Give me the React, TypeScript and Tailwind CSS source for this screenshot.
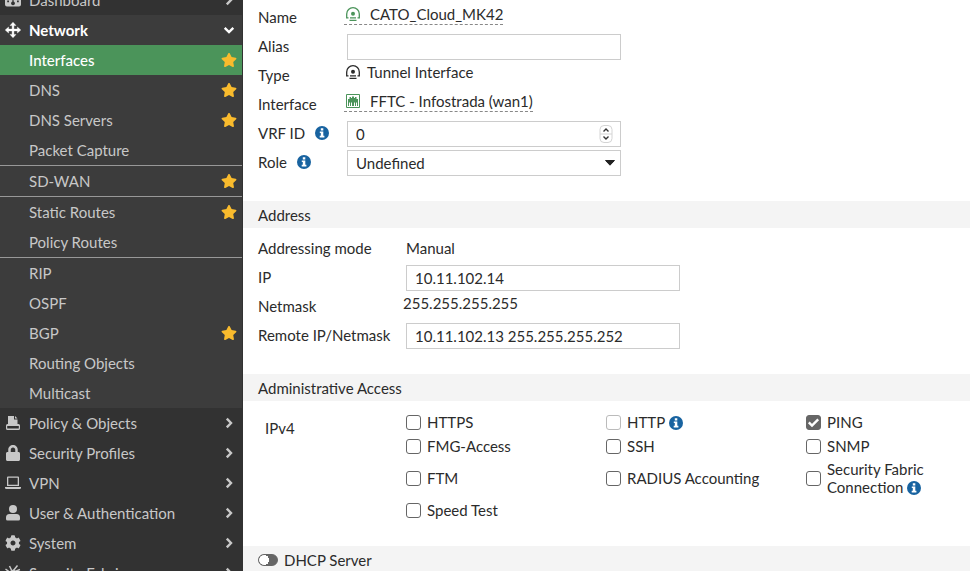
import type { ReactNode } from 'react'
import { FaCog, FaLock, FaStar } from 'react-icons/fa'

type MenuItem = {
  label: string;
  starred?: boolean;
  active?: boolean;
  divider?: boolean;
}

const networkItems: MenuItem[] = [
  { label: 'Interfaces', starred: true, active: true },
  { label: 'DNS', starred: true },
  { label: 'DNS Servers', starred: true },
  { label: 'Packet Capture' },
  { label: 'SD-WAN', starred: true, divider: true },
  { label: 'Static Routes', starred: true, divider: true },
  { label: 'Policy Routes' },
  { label: 'RIP', divider: true },
  { label: 'OSPF' },
  { label: 'BGP', starred: true },
  { label: 'Routing Objects' },
  { label: 'Multicast' },
];

const DashboardIcon = () => (
  <svg width="16" height="16" viewBox="0 0 16 16" fill="currentColor">
    <path fillRule="evenodd" d="M2.5 1h11A2.5 2.5 0 0 1 16 3.500V12.500A2 2 0 0 1 14 14.500H2A2 2 0 0 1 0 12.500V3.500A2.500 2.500 0 0 1 2.500 1ZM2.200 8.500v1.800H4V8.500ZM12 8.500v1.800h1.800V8.500ZM7.400 5v4.600a1.900 1.900 0 1 0 1.200 0V5ZM4 4.500v1.800h1.800V4.500ZM10.200 4.500v1.800H12V4.500Z" />
  </svg>
)

const NetworkIcon = () => (
  <svg width="16" height="16" viewBox="0 0 16 16" fill="currentColor" stroke="currentColor" strokeWidth="0.400" strokeLinejoin="round">
    <path d="M8 0.200l3 3.400H8.900v3.500h3.500V5L15.800 8l-3.400 3V8.900H8.900v3.500H11L8 15.800l-3-3.400h2.100V8.900H3.600V11L0.200 8l3.400-3v2.100h3.500V3.600H5z" />
  </svg>
)

const PolicyIcon = () => (
  <svg width="14" height="14" viewBox="0 0 14 14" fill="currentColor">
    <path d="M2 0h6v3.500h3.500V9H2z" />
    <path d="M9 0l2.500 2.500H9z" />
    <path fillRule="evenodd" d="M1.500 8h11A1.500 1.500 0 0 1 14 9.500v3a1.500 1.500 0 0 1-1.500 1.500h-11A1.500 1.500 0 0 1 0 12.500v-3A1.500 1.500 0 0 1 1.500 8zM1.200 10v2.500h11.600V10z" />
  </svg>
)

const LaptopIcon = () => (
  <svg width="16" height="14" viewBox="0 0 16 14" fill="currentColor">
    <path fillRule="evenodd" d="M3 0.500h10a1 1 0 0 1 1 1V10H2V1.500a1 1 0 0 1 1-1zM3.300 1.800v6.900h9.400V1.800z" />
    <path d="M0 11h16v0.700A1.300 1.300 0 0 1 14.700 13H1.300A1.300 1.300 0 0 1 0 11.700z" />
  </svg>
)

const UserIcon = () => (
  <svg width="14" height="16" viewBox="0 0 14 16" fill="currentColor">
    <circle cx="7" cy="4" r="4" />
    <path d="M3.500 9h7A3.500 3.500 0 0 1 14 12.500V14a1.500 1.500 0 0 1-1.500 1.500h-11A1.500 1.500 0 0 1 0 14v-1.500A3.500 3.500 0 0 1 3.500 9z" />
  </svg>
)

const FabricIcon = () => (
  <svg width="16" height="16" viewBox="0 0 16 16" fill="none" stroke="currentColor" strokeWidth="1.500">
    <path d="M0.500 4l4 3M4.500 1l2 4M12.500 0.500L8 6M10 6.500l5-2M3 9.500h3M10 10l4 2M8 11v4M5 11l-3 3" />
    <circle cx="8" cy="8" r="2.500" fill="currentColor" />
  </svg>
)

const Chevron = ({ open }: { open?: boolean }) => (
  <svg width="12" height="12" viewBox="0 0 12 12" fill="none" stroke="currentColor" strokeWidth="2.400">
    <path d={open ? 'M1.700 3.800L6 8l4.300-4.200' : 'M3.800 1.700L8 6l-4.200 4.300'} />
  </svg>
)

const TunnelIcon = () => (
  <svg width="14" height="14" viewBox="0 0 14 14" fill="none" stroke="currentColor" strokeWidth="1.300">
    <path d="M2.500 10.800H0.700V7a6.300 6.300 0 0 1 12.600 0v3.800h-1.800" />
    <path d="M3.500 13.300h7M4 10.800h6" />
    <circle cx="7" cy="6.700" r="2" fill="currentColor" stroke="none" />
  </svg>
)

const PortIcon = () => (
  <svg width="14" height="14" viewBox="0 0 14 14">
    <path fill="none" stroke="currentColor" d="M0.500 0.500h13v13H0.500z" />
    <path fill="currentColor" d="M2 12V5h1.500V3H5v1h1V2.500h2V4h1V3h1.500v2H12v7h-1V8.500h-1V12H9V8.500H8V12H6V8.500H5V12H4V8.500H3V12z" />
  </svg>
)

const Info = () => (
  <svg className="inline-block shrink-0 align-[-2px]" width="14" height="14" viewBox="0 0 14 14">
    <circle cx="7" cy="7" r="7" fill="#1863a0" />
    <path fill="#fff" d="M5.800 2.200h2.500v2.200H5.800zM4.800 5.400h3.500v4.400h1.100v1.700H4.700V9.800h1.100V7.100h-1z" />
  </svg>
)

const mainItems: { label: string; icon: ReactNode }[] = [
  { label: 'Policy & Objects', icon: <PolicyIcon /> },
  { label: 'Security Profiles', icon: <FaLock size={16} /> },
  { label: 'VPN', icon: <LaptopIcon /> },
  { label: 'User & Authentication', icon: <UserIcon /> },
  { label: 'System', icon: <FaCog size={16} /> },
  { label: 'Security Fabric', icon: <FabricIcon /> },
];

const MainItem = ({ label, icon, open }: { label: string; icon: ReactNode; open?: boolean }) => (
  <button
    type="button"
    className={`flex h-[30px] w-full shrink-0 items-center pr-[7px] pl-[5px] text-left ${open ? 'bg-[#3c3c3c] font-bold text-white' : ''}`}
  >
    <span className="flex w-4 shrink-0 justify-center">{icon}</span>
    <span className="ml-2 flex-1">{label}</span>
    <Chevron open={open} />
  </button>
)

const Sidebar = () => (
  <nav className="w-[243px] shrink-0 overflow-hidden border-r border-[#323232] bg-[#323232] text-[#c8c8c8]">
    {/* scrolled half out of view */}
    <div className="flex h-[15px] items-end overflow-hidden">
      <MainItem label="Dashboard" icon={<DashboardIcon />} />
    </div>
    <MainItem label="Network" icon={<NetworkIcon />} open />
    <ul className="bg-[#3c3c3c]">
      {networkItems.map((item) => (
        <li key={item.label} className={item.divider ? 'border-t border-[#989898]' : ''}>
          <a
            href="#"
            className={`flex h-[30px] items-center justify-between pr-[5px] pl-[29px] ${item.active ? 'bg-[#4b945a] font-medium text-white' : ''}`}
          >
            {item.label}
            {item.starred && <FaStar size={16} className="text-[#f9bb2d]" />}
          </a>
        </li>
      ))}
    </ul>
    {mainItems.map((item) => (
      <MainItem key={item.label} label={item.label} icon={item.icon} />
    ))}
  </nav>
)

const SectionTitle = ({ children }: { children: ReactNode }) => (
  <h2 className="flex h-[27px] items-center bg-[#f4f4f4] px-[15px]">{children}</h2>
)

const Row = ({ label, htmlFor, info, wide, children }: {
  label: string;
  htmlFor?: string;
  info?: boolean;
  wide?: boolean;
  children: ReactNode;
}) => (
  <div className="flex h-[29px] items-center">
    <div className={`flex shrink-0 items-center gap-2.5 pb-0.5 ${wide ? 'w-[145px]' : 'w-[86px]'}`}>
      {htmlFor ? <label htmlFor={htmlFor} className="whitespace-nowrap">{label}</label> : <span>{label}</span>}
      {info && <Info />}
    </div>
    {children}
  </div>
)

const fieldClass = 'h-[26px] w-full appearance-none border border-[#cccccc] bg-white px-2 outline-none'

const checks: { label: string; checked?: boolean; disabled?: boolean; info?: boolean }[] = [
  { label: 'HTTPS' },
  { label: 'HTTP', disabled: true, info: true },
  { label: 'PING', checked: true },
  { label: 'FMG-Access' },
  { label: 'SSH' },
  { label: 'SNMP' },
  { label: 'FTM' },
  { label: 'RADIUS Accounting' },
  { label: 'Security Fabric Connection', info: true },
  { label: 'Speed Test' },
];

const Check = ({ label, checked, disabled, info }: { label: string; checked?: boolean; disabled?: boolean; info?: boolean }) => (
  <label className="flex items-center gap-1.5 leading-[18px]">
    <span className="relative size-[15px] shrink-0">
      <input
        type="checkbox"
        defaultChecked={checked}
        disabled={disabled}
        className="peer block size-[15px] appearance-none rounded-[3px] border border-[#666666] bg-white checked:bg-[#666666] disabled:border-[#bbbbbb]"
      />
      <svg className="pointer-events-none absolute inset-0 hidden peer-checked:block" width="15" height="15" viewBox="0 0 15 15" fill="none" stroke="#fff" strokeWidth="2.400">
        <path d="M2.800 7.300l3.200 3.200 6.200-6.200" />
      </svg>
    </span>
    <span>
      {label}
      {info && <> <Info /></>}
    </span>
  </label>
)

const InterfaceForm = () => (
  <main className="min-w-0 flex-1 overflow-hidden bg-white text-[#2b2b2b]">
    <section className="px-[15px] pt-[3px] pb-6">
      <Row label="Name">
        <a href="#" className="flex h-[22px] items-center gap-2.5 self-start border-b border-dashed border-[#888888] pl-0.5">
          <span className="text-[#4b945a]"><TunnelIcon /></span>
          CATO_Cloud_MK42
        </a>
      </Row>
      <Row label="Alias" htmlFor="alias">
        <div className="ml-[3px] w-[274px]">
          <input id="alias" type="text" className={fieldClass} />
        </div>
      </Row>
      <Row label="Type">
        <span className="flex h-[22px] items-center gap-[7px] self-start pl-0.5">
          <TunnelIcon />
          Tunnel Interface
        </span>
      </Row>
      <Row label="Interface">
        <a href="#" className="flex h-[22px] items-center gap-2.5 self-start border-b border-dashed border-[#888888] pl-0.5">
          <span className="text-[#4b945a]"><PortIcon /></span>
          FFTC - Infostrada (wan1)
        </a>
      </Row>
      <Row label="VRF ID" htmlFor="vrf" info>
        <div className="relative ml-[3px] w-[274px]">
          <input id="vrf" type="number" defaultValue={0} className={`${fieldClass} [-moz-appearance:textfield] [&::-webkit-inner-spin-button]:appearance-none`} />
          <svg className="pointer-events-none absolute top-1 right-2" width="14" height="18" viewBox="0 0 14 18" fill="none">
            <rect x="1" y="0.500" width="12" height="17" rx="4" stroke="#d4d4d4" />
            <path d="M1 9h12" stroke="#d4d4d4" />
            <path d="M4.500 6.500L7 4l2.500 2.500M4.500 11.500L7 14l2.500-2.500" stroke="#333" strokeWidth="1.400" />
          </svg>
        </div>
      </Row>
      <Row label="Role" htmlFor="role" info>
        <div className="relative ml-[3px] w-[274px]">
          <select id="role" className={fieldClass}>
            <option>Undefined</option>
          </select>
          <svg className="pointer-events-none absolute top-2.5 right-[5px]" width="12" height="6" viewBox="0 0 12 6">
            <path d="M1.500 0.500h9L6 5.200z" fill="#222" stroke="#222" strokeLinejoin="round" />
          </svg>
        </div>
      </Row>
    </section>

    <SectionTitle>Address</SectionTitle>
    <section className="px-[15px] pt-1.5 pb-6">
      <Row label="Addressing mode" wide>
        <span className="ml-[3px] pb-0.5">Manual</span>
      </Row>
      <Row label="IP" htmlFor="ip" wide>
        <div className="ml-[3px] w-[274px]">
          <input id="ip" type="text" defaultValue="10.11.102.14" className={fieldClass} />
        </div>
      </Row>
      <Row label="Netmask" wide>
        <span className="flex h-[22px] items-center self-start">255.255.255.255</span>
      </Row>
      <Row label="Remote IP/Netmask" htmlFor="remote" wide>
        <div className="ml-[3px] w-[274px]">
          <input id="remote" type="text" defaultValue="10.11.102.13 255.255.255.252" className={fieldClass} />
        </div>
      </Row>
    </section>

    <SectionTitle>Administrative Access</SectionTitle>
    <section className="flex pt-[9px] pb-6 pl-[22px]">
      <h3 className="w-[141px] shrink-0 pt-2">IPv4</h3>
      <div className="grid flex-1 grid-cols-[200px_200px_minmax(0,200px)] grid-rows-[24px_24px_40px_24px]">
        {checks.map((check) => (
          <Check key={check.label} {...check} />
        ))}
      </div>
    </section>

    <SectionTitle>
      <label className="flex items-center gap-1.5">
        <input
          type="checkbox"
          role="switch"
          className="h-3 w-5 appearance-none rounded-full border border-[#666666] bg-[radial-gradient(circle_at_5px_5px,#fff_5px,#666_5px)] checked:bg-[radial-gradient(circle_at_13px_5px,#fff_5px,#666_5px)]"
        />
        DHCP Server
      </label>
    </SectionTitle>
  </main>
)

const App = () => {
  return (
    <div className="flex h-screen overflow-hidden font-['Lato',sans-serif] text-[15px] leading-5">
      <Sidebar />
      <InterfaceForm />
    </div>
  )
}

export default App;
